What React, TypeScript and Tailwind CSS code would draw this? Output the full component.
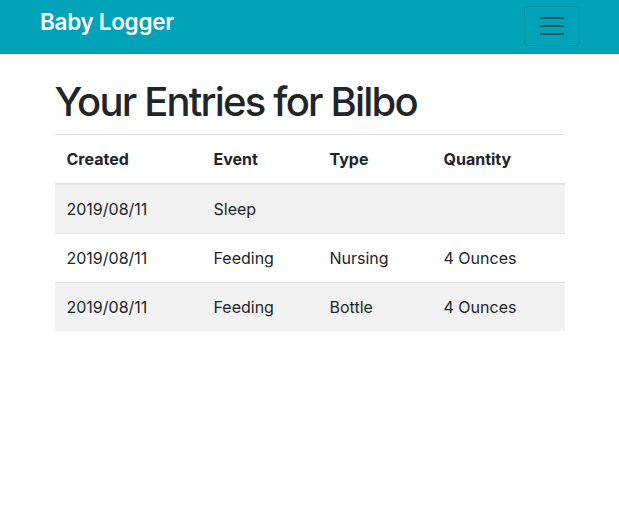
const rows = [
  { created: "2019/08/11", event: "Sleep", type: "", quantity: "" },
  { created: "2019/08/11", event: "Feeding", type: "Nursing", quantity: "4 Ounces" },
  { created: "2019/08/11", event: "Feeding", type: "Bottle", quantity: "4 Ounces" },
];

export default function App() {
  return (
    <div className="min-h-screen bg-white text-[#212529]" style={{ fontFamily: "Inter, 'Noto Sans', sans-serif" }}>
      {/* Navbar */}
      <nav className="flex h-[54px] items-start justify-between bg-[#00a3b8] pl-10 pr-[39px]">
        <a href="#" className="mt-[7px] text-[22.5px] font-semibold leading-[30px] tracking-[-0.3px] text-white">
          Baby Logger
        </a>
        <button className="mt-[6px] flex h-10 w-14 flex-col items-center justify-center gap-[6px] rounded border border-black/10">
          <span className="block h-[2px] w-6 bg-[#0b5560]" />
          <span className="block h-[2px] w-6 bg-[#0b5560]" />
          <span className="block h-[2px] w-6 bg-[#0b5560]" />
        </button>
      </nav>

      {/* Entries */}
      <main className="mx-auto w-[540px] px-[15px]">
        <h1 className="mt-6 mb-2 text-[40px] font-medium leading-[48px] tracking-[-1.8px]">
          Your Entries for Bilbo
        </h1>
        <table className="w-full border-collapse text-[16px] leading-6">
          <thead>
            <tr className="border-t border-b-2 border-[#dee2e6]">
              <th className="w-[147px] p-3 text-left font-bold">Created</th>
              <th className="w-[116px] p-3 text-left font-bold">Event</th>
              <th className="w-[114px] p-3 text-left font-bold">Type</th>
              <th className="p-3 text-left font-bold">Quantity</th>
            </tr>
          </thead>
          <tbody>
            {rows.map((r, i) => (
              <tr key={i} className={i % 2 === 0 ? "border-t border-[#dee2e6] bg-[#f2f2f2]" : "border-t border-[#dee2e6]"}>
                <td className="p-3">{r.created}</td>
                <td className="p-3">{r.event}</td>
                <td className="p-3">{r.type}</td>
                <td className="p-3">{r.quantity}</td>
              </tr>
            ))}
          </tbody>
        </table>
      </main>
    </div>
  );
}
